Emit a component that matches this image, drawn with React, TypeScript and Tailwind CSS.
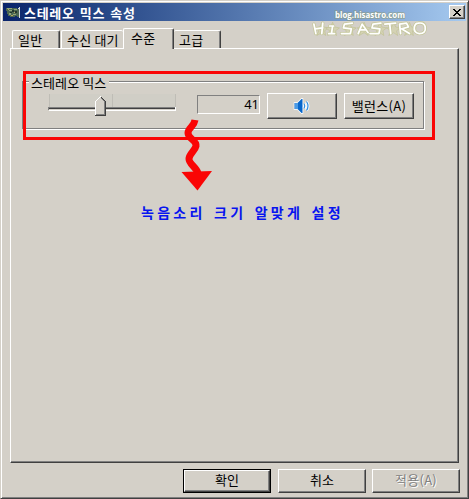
import React from 'react';

const raised =
  'border border-t-white border-l-white border-r-[#404040] border-b-[#404040] shadow-[inset_-1px_-1px_0_#808080] bg-[#d4d0c8]';

function Button({ children, className = '' }: { children: React.ReactNode; className?: string }) {
  return <button className={`flex items-center justify-center ${raised} ${className}`}>{children}</button>;
}

function Tab({ label, className }: { label: string; className: string }) {
  return (
    <div
      className={`rounded-t-[2px] border border-b-0 border-t-white border-l-white border-r-[#404040] bg-[#d4d0c8] leading-[17px] shadow-[inset_-1px_0_0_#808080] ${className}`}
    >
      {label}
    </div>
  );
}

function CardIcon() {
  return (
    <svg width="16" height="16" viewBox="0 0 16 16" shapeRendering="crispEdges">
      <path d="M0 4h11v1h2v8h-2v-1H9v1H4v-1H2v-2H1V7H0z" fill="#4b6650" />
      <path d="M1 4h5v1H1zM3 6h4v1H3zM8 5h3v1H8zM3 9h2v2H3zM7 10h3v1H7z" fill="#8fa57c" />
      <path d="M6 6h2v2H6zM9 7h2v2H9zM4 8h2v1H4z" fill="#22352c" />
      <path d="M2 5h1v1H2zM8 8h1v1H8zM5 11h2v1H5z" fill="#b5a65c" />
      <path d="M12 4h1V3h1v11h-1V5h-1z" fill="#d5d9df" />
    </svg>
  );
}

function Speaker() {
  return (
    <svg width="18" height="16" viewBox="0 0 18 16">
      <path d="M1.500 5h3l4-4h1v14H8.500l-4-4H1.500z" fill="#0867cc" stroke="white" strokeWidth="1.5" paintOrder="stroke" />
      <path d="M2 5h3v6H2z" fill="#4b9be5" />
      <path d="M11 5.500q1.500 2.500 0 5M13.500 3.500q3 4.500 0 9" fill="none" stroke="white" strokeWidth="3" />
      <path d="M11 5.500q1.500 2.500 0 5M13.500 3.500q3 4.500 0 9" fill="none" stroke="#2f8ce0" strokeWidth="1.2" />
    </svg>
  );
}

function Slider() {
  return (
    <svg width="129" height="26" viewBox="0 0 129 26" shapeRendering="crispEdges">
      <path d="M2 1h125v13H2z" fill="#d0cec6" />
      <path d="M1 1h1v13H1zM64 1h1v13h-1zM127 1h1v13h-1z" fill="#bfbdb6" />
      <path d="M0 14h127v1H0z" fill="#808080" />
      <path d="M1 15h126v1H1z" fill="#404040" />
      <path d="M0 15h1v2H0z" fill="#808080" />
      <path d="M1 17h127v1H1zM127 14h1v4h-1z" fill="white" />
      <path d="M47 8l5-5 5 5v14H47z" fill="#d4d0c8" />
      <path d="M47 8h1v14h-1zM48 7h1v1h-1zM49 6h1v1h-1zM50 5h1v1h-1zM51 4h1v1h-1zM52 3h1v1h-1z" fill="white" />
      <path d="M53 4h1v1h-1zM54 5h1v1h-1zM55 6h1v1h-1zM56 7h1v1h-1zM57 8h1v15h-1zM47 22h11v1H47z" fill="#404040" />
      <path d="M56 8h1v14h-1zM48 21h9v1h-9zM53 5h1v1h-1zM54 6h1v1h-1zM55 7h1v1h-1z" fill="#808080" />
    </svg>
  );
}

function Watermark() {
  return (
    <svg className="absolute left-[307px] top-[5px]" width="125" height="34" viewBox="0 0 125 34">
      <g stroke="#8f9d78" strokeOpacity="0.55" strokeWidth="2" paintOrder="stroke" fill="white" strokeLinejoin="round">
        <text x="27" y="11.500" fontSize="9" fontWeight="700" textLength="70" lengthAdjust="spacingAndGlyphs" className="font-['Open_Sans',sans-serif]">
          blog.hisastro.com
        </text>
      </g>
      <g transform="translate(-1 1) scale(.985 .95)">
        <g fill="#d4d2b4" stroke="#bfc08f" strokeWidth="0.6">
          {[15, 26, 43, 58, 74, 88, 104].map((x) => (
            <path key={x} d={`M${x} 16l2 5 5 1-4 3 1 5-4-3-5 3 2-5-4-3 5-1z`} />
          ))}
        </g>
        <g fill="none" strokeLinecap="round" strokeLinejoin="round">
          {['#c5c79c', '#ffffff'].map((c, i) => (
            <path
              key={c}
              stroke={c}
              strokeWidth={i === 0 ? 3.4 : 1.8}
              d="M7 18l2 10M16 17l-1 11M8 23l8-1M23 20h4M26 20l-1 7M22 28h6M46 17l-8 1-1 4 8 1-1 5-9 0M52 28l4-10 6 9M54 24h6M75 17l-8 1-1 4 8 1-1 5-9 0M79 18l11-1M84 18l1 10M95 28l-1-10 7-1 2 4-7 2 8 5M113 17q6-1 7 4q1 7-6 7q-6-1-5-7q1-4 4-4z"
            />
          ))}
        </g>
      </g>
    </svg>
  );
}

export default function App() {
  return (
    <div className="relative flex h-[499px] w-[469px] flex-col border border-t-[#d4d0c8] border-l-[#d4d0c8] border-r-[#404040] border-b-[#404040] bg-[#d4d0c8] p-[2px] font-['Noto_Sans_CJK_KR',sans-serif] text-[13px] text-black shadow-[inset_1px_1px_0_white,inset_-1px_-1px_0_#808080]">
      <header className="flex h-[18px] w-[463px] shrink-0 items-center bg-linear-to-r from-[#0a246a] to-[#a6caf0] pl-[3px]">
        <CardIcon />
        <h1 className="ml-[2px] flex-1 whitespace-nowrap text-[13px] font-bold leading-[17px] tracking-[0.7px] text-white [word-spacing:1.5px]">
          스테레오 믹스 속성
        </h1>
        <Button className="mr-[1px] h-[14px] w-[16px]">
          <svg width="8" height="7" viewBox="0 0 8 7" shapeRendering="crispEdges">
            <path d="M0 0h2v1h1v1h2V1h1V0h2v1H7v1H6v1H5v1h1v1h1v1h1v1H6V6H5V5H3v1H2v1H0V6h1V5h1V4h1V3H2V2H1V1H0z" />
          </svg>
        </Button>
      </header>

      <nav className="ml-[9px] mt-[7px] flex h-[20px] shrink-0 items-end whitespace-nowrap tracking-[0.2px]">
        <Tab label="일반" className="h-[18px] w-[48px] pl-[5px]" />
        <Tab label="수신 대기" className="ml-px h-[18px] w-[62px] border-r-0 pl-[5px] shadow-none" />
        <Tab label="수준" className="relative z-10 -mb-px h-[21px] w-[51px] pl-[7px]" />
        <Tab label="고급" className="h-[18px] w-[47px] border-l-0 pl-[5px]" />
      </nav>

      <main className="ml-[7px] h-[415px] w-[449px] shrink-0 border border-t-white border-l-white border-r-[#404040] border-b-[#404040] px-[11px] pt-[32px] shadow-[inset_-1px_-1px_0_#808080]">
        <section className="h-[48px] w-[402px] border border-[#808080] shadow-[1px_1px_0_white,inset_1px_1px_0_white]">
          <h2 className="-mt-[7px] ml-[6px] h-[18px] w-[80px] whitespace-nowrap bg-[#d4d0c8] pl-[2px] leading-[16px] tracking-[0.1px]">
            스테레오 믹스
          </h2>
          <div className="ml-[25px] flex items-start">
            <Slider />
            <div className="ml-[20px] mt-[2px] h-[19px] w-[63px] border border-t-[#808080] border-l-[#808080] border-r-white border-b-white text-right font-['Noto_Sans',sans-serif] text-[13px] leading-[17px]">
              41
            </div>
            <Button className="ml-[7px] h-[26px] w-[70px]"><Speaker /></Button>
            <Button className="ml-[7px] h-[26px] w-[70px] whitespace-nowrap pb-px tracking-[0.3px]">밸런스(A)</Button>
          </div>
        </section>
        <p className="ml-[119px] mt-[71px] w-[232px] whitespace-nowrap text-[14px] font-bold leading-[24px] tracking-[3.3px] text-[#0714ef] [word-spacing:1.8px]">
          녹음소리 크기 알맞게 설정
        </p>
      </main>

      <footer className="ml-[180px] mt-[6px] flex gap-[7px]">
        <div className="h-[24px] w-[88px] border border-black">
          <Button className="h-full w-full pb-[2px]">확인</Button>
        </div>
        <Button className="h-[24px] w-[88px] pb-[2px]">취소</Button>
        <Button className="-ml-px h-[24px] w-[88px] pb-[2px] tracking-[0.3px] text-[#808080] [text-shadow:1px_1px_0_white]">적용(A)</Button>
      </footer>

      <div className="pointer-events-none absolute left-[22px] top-[70px] h-[69px] w-[412px] border-[3px] border-[#fa0505]" />
      <svg className="absolute left-[179px] top-[118px]" width="36" height="74" viewBox="180 119 36 74">
        <path
          d="M195 120c-1 7-7 8-7 13c0 6 9 7 8 13c-1 5-7 8-7 13c0 5 7 8 9 14"
          fill="none"
          stroke="#fa0505"
          strokeWidth="7"
        />
        <path d="M181.500 172l30.500-1-14.500 19.500z" fill="#fa0505" />
      </svg>
      <Watermark />
    </div>
  );
}
